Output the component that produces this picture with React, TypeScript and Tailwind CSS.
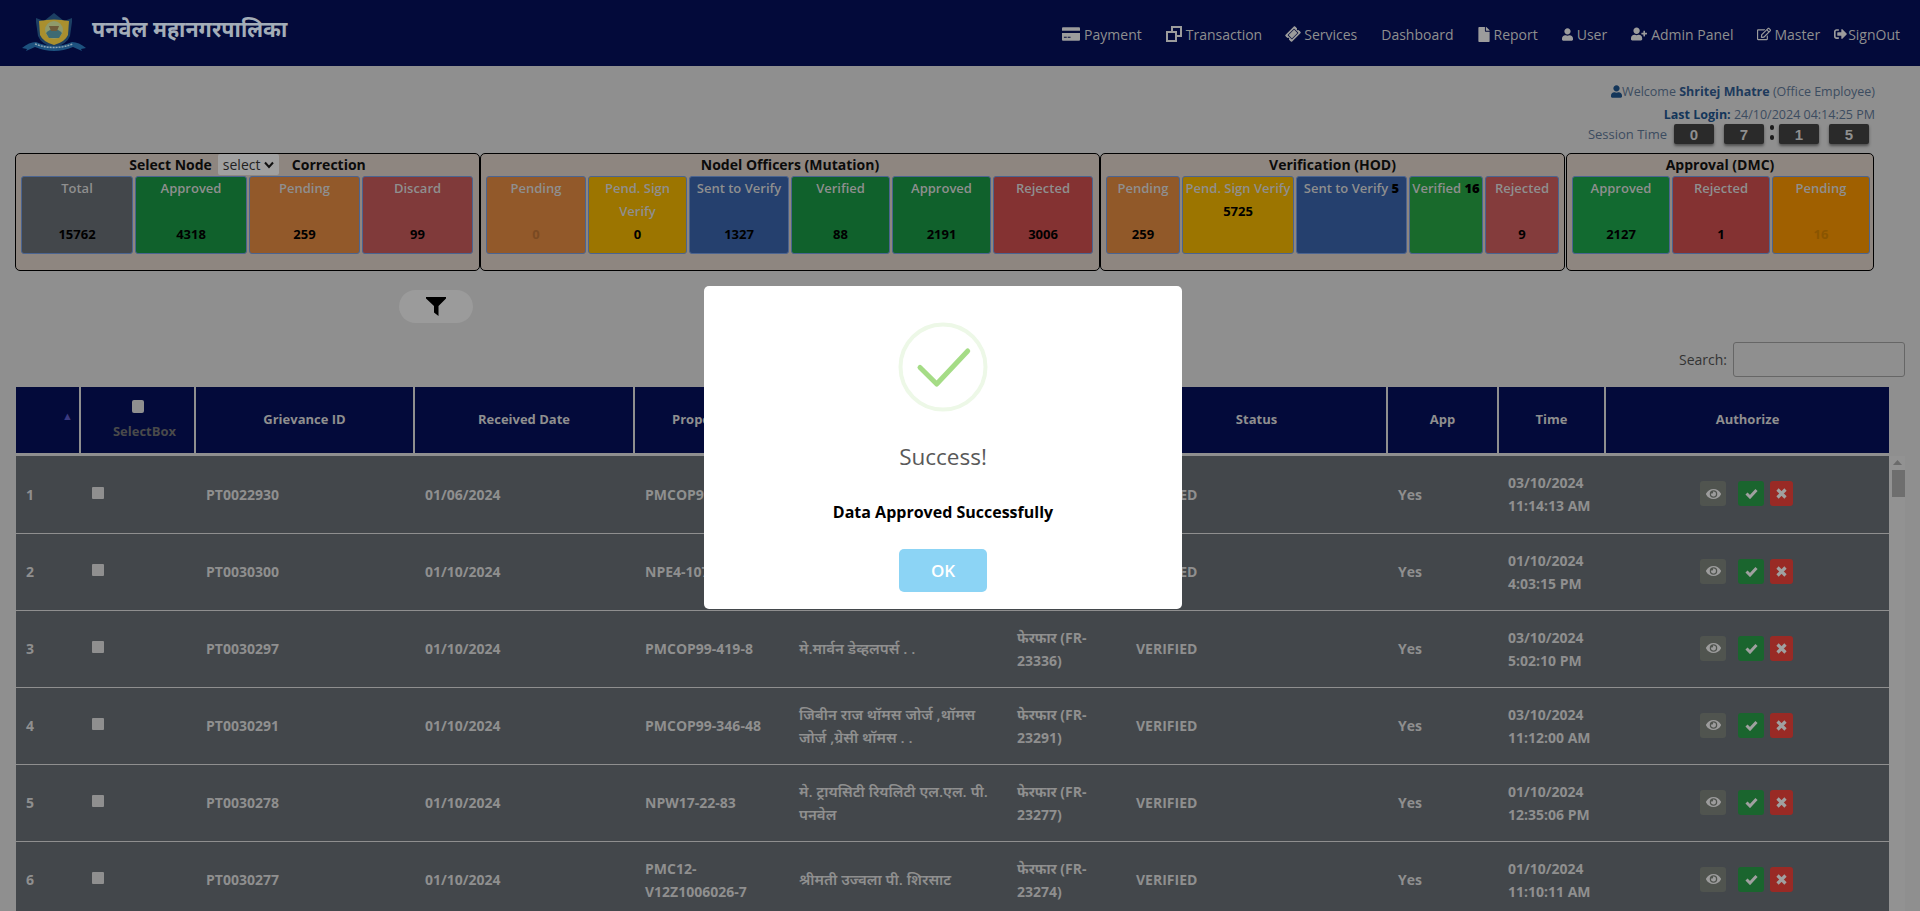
import React from "react";
import { FaTicketAlt, FaFile, FaUser, FaUserPlus, FaRegEdit, FaSignOutAlt, FaEye } from "react-icons/fa";

const Logo = () => (
  <svg width="66" height="40" viewBox="0 0 66 40" className="shrink-0">
    <path d="M15 6 L23 9 L33 1 L43 9 L51 6 L51 10 L49 24 Q46 32 33 36 Q20 32 17 24 L15 10 Z" fill="#1c3f63" />
    <path d="M18 9 Q33 6 48 9 L47 23 Q44 30 33 33 Q22 30 19 23 Z" fill="#a98f2e" />
    <circle cx="33" cy="18" r="9" fill="#8f9a6b" />
    <path d="M25 21 Q33 13 41 21 L38 26 L28 26 Z" fill="#3d6a73" />
    <path d="M28 14 L38 14 L36 19 L30 19 Z" fill="#6e5a3a" />
    <path d="M1 36 Q8 30 15 30 Q33 38 51 30 Q58 30 65 36 L60 37 L61 39 L52 35 Q33 43 14 35 L5 39 L6 37 Z" fill="#1d527f" />
    <path d="M14 32 Q33 39 52 32" stroke="#8fa6b5" strokeWidth="1.4" strokeDasharray="2 1" fill="none" />
  </svg>
);

const CardIcon = () => (
  <svg width="18" height="14" viewBox="0 0 19 14">
    <path d="M1 0 H18 Q19 0 19 1 V3.5 H0 V1 Q0 0 1 0 Z" fill="#9c9c9c" />
    <path fillRule="evenodd" d="M0 6 H19 V13 Q19 14 18 14 H1 Q0 14 0 13 Z M2 10 V11 H5 V10 Z M6 10 V11 H9 V10 Z" fill="#9c9c9c" />
  </svg>
);

const CloneIcon = () => (
  <svg width="16" height="16" viewBox="0 0 16 16" fill="none" stroke="#9c9c9c" strokeWidth="2">
    <rect x="6" y="1" width="9" height="9" />
    <rect x="1" y="6" width="9" height="9" fill="#030a3a" />
  </svg>
);

const nav: { t: string; i?: React.ReactNode; cls?: string }[] = [
  { t: "Payment", i: <CardIcon /> },
  { t: "Transaction", i: <CloneIcon /> },
  { t: "Services", i: <FaTicketAlt className="w-[14px] h-[14px] -rotate-45 text-[#9c9c9c]" /> },
  { t: "Dashboard" },
  { t: "Report", i: <FaFile className="w-[12px] h-[15px] text-[#9c9c9c]" /> },
  { t: "User", i: <FaUser className="w-[11px] h-[13px] text-[#9c9c9c]" /> },
  { t: "Admin Panel", i: <FaUserPlus className="w-[16px] h-[14px] text-[#9c9c9c]" /> },
  { t: "Master", i: <FaRegEdit className="w-[14px] h-[14px] text-[#9c9c9c]" />, cls: "pl-[11px] pr-[10px]" },
];

type C = { w: number; bg: string; label: React.ReactNode; num?: React.ReactNode; numCls?: string; blank?: boolean; nowrap?: boolean };

const Card = ({ w, bg, label, num, numCls, blank = true, nowrap }: C) => (
  <div style={{ width: w, backgroundColor: bg }} className="h-[78px] shrink-0 rounded-[3px] border border-[#4b6490] text-center text-[13px] leading-[23px] font-semibold text-[#8f8f8f]">
    <div className={nowrap ? "whitespace-nowrap" : ""}>{label}</div>
    {blank && <div className="h-[23px]" />}
    {num !== undefined && <div className={`font-bold ${numCls ?? "text-black"}`}>{num}</div>}
  </div>
);

const Group = ({ w, title, cards }: { w: number; title: React.ReactNode; cards: C[] }) => (
  <div style={{ width: w }} className="h-[118px] shrink-0 rounded-[5px] border border-black bg-[#8e8680] px-[5px]">
    <div className="h-[22px] pb-[1px] flex items-center justify-center gap-[3px] font-bold text-[#0b0b0b] leading-[21px]">{title}</div>
    <div className="flex gap-[2px]">{cards.map((c, i) => <Card key={i} {...c} />)}</div>
  </div>
);

const GREEN = "#10612c", ORANGE = "#92592a", BLUE = "#25406e", RED = "#843232", GOLD = "#9c7500";

const Timer = ({ d }: { d: string }) => (
  <div className="w-[40px] h-[20px] rounded-[2px] bg-[#2a2a2a] shadow-[0_2px_3px_rgba(0,0,0,0.45)] flex items-center justify-center text-[15px] font-bold text-[#8f8f8f] font-['Liberation_Sans',sans-serif]">{d}</div>
);

const widths = [64, 115, 219, 220, 155, 218, 119, 261, 111, 107, 284];
const Cols = () => (
  <colgroup>
    {widths.map((w, i) => <col key={i} style={{ width: w }} />)}
  </colgroup>
);

const heads = ["", "", "Grievance ID", "Received Date", "Property No", "Name", "Type", "Status", "App", "Time", "Authorize"];

const rows = [
  ["1", "PT0022930", "01/06/2024", "PMCOP99-419-7", "मे.मार्वन डेव्हलपर्स . .", "फेरफार (FR-23340)", "03/10/2024", "11:14:13 AM"],
  ["2", "PT0030300", "01/10/2024", "NPE4-107-12", "मे.मार्वन डेव्हलपर्स . .", "फेरफार (FR-23338)", "01/10/2024", "4:03:15 PM"],
  ["3", "PT0030297", "01/10/2024", "PMCOP99-419-8", "मे.मार्वन डेव्हलपर्स . .", "फेरफार (FR-23336)", "03/10/2024", "5:02:10 PM"],
  ["4", "PT0030291", "01/10/2024", "PMCOP99-346-48", "जिबीन राज थॉमस जोर्ज ,थॉमस जोर्ज ,ग्रेसी थॉमस . .", "फेरफार (FR-23291)", "03/10/2024", "11:12:00 AM"],
  ["5", "PT0030278", "01/10/2024", "NPW17-22-83", "मे. ट्रायसिटी रियलिटी एल.एल. पी. पनवेल", "फेरफार (FR-23277)", "01/10/2024", "12:35:06 PM"],
  ["6", "PT0030277", "01/10/2024", "PMC12-V12Z1006026-7", "श्रीमती उज्वला पी. शिरसाट", "फेरफार (FR-23274)", "01/10/2024", "11:10:11 AM"],
];

export default function App() {
  return (
    <div className="relative h-[911px] overflow-hidden bg-[#8f8f8f] text-[14px] font-['Open_Sans','Noto_Sans_Devanagari','Noto_Sans',sans-serif]">
      <header className="h-[66px] bg-[#030a3a] flex items-center pl-[21px]">
        <div className="mt-[-1px] mb-[1px]"><Logo /></div>
        <div className="ml-[5px] mt-[-8px] text-[21.5px] font-bold text-[#a3adb8] leading-none">पनवेल महानगरपालिका</div>
        <nav className="ml-auto flex items-center h-full pr-[20px] text-[#8f8f8f] mt-[2px]">
          {nav.map((n) => (
            <div key={n.t} className={`flex items-center gap-[4px] ${n.cls ?? "px-[12px]"}`}>
              {n.i}
              <span>{n.t}</span>
            </div>
          ))}
          <div className="flex items-center gap-[1px] pl-[4px]"><FaSignOutAlt className="w-[13px] h-[14px] text-[#9c9c9c]" /><span>SignOut</span></div>
        </nav>
      </header>

      <div className="h-[87px] pr-[45px] flex flex-col items-end text-[12.5px] text-[#3c4c60] pt-[14px] leading-[23px]">
        <div className="flex items-center"><FaUser className="w-[11px] h-[13px] text-[#14365a]" /><span>Welcome <b className="text-[#1d3a5c]">Shritej Mhatre</b> (Office Employee)</span></div>
        <div><b className="text-[#14365a]">Last Login:</b> 24/10/2024 04:14:25 PM</div>
        <div className="flex items-start h-[20px] pr-[6px] mt-[-2px]">
          <span className="mr-[7px] mt-[-1px] text-[13px]">Session Time</span>
          <Timer d="0" /><div className="w-[10px]" /><Timer d="7" />
          <div className="w-[15px] flex flex-col items-center gap-[5px] pt-[1px]"><i className="w-[4px] h-[5px] rounded-full bg-[#1c1c1c]" /><i className="w-[4px] h-[5px] rounded-full bg-[#1c1c1c]" /></div>
          <Timer d="1" /><div className="w-[10px]" /><Timer d="5" />
        </div>
      </div>

      <section className="flex pl-[15px]">
        <Group w={465} title={<><span>Select Node</span><span className="w-[61px] h-[21px] ml-[3px] bg-[#a0a0a0] rounded-[2px] font-normal text-[#222] flex items-center justify-between px-[5px]">select<svg width="10" height="8" viewBox="0 0 10 8"><path d="M1 1.5 L5 6 L9 1.5" stroke="#111" strokeWidth="2" fill="none" /></svg></span><span className="ml-[10px]">Correction</span></>} cards={[
          { w: 112, bg: "#43474b", label: "Total", num: 15762 },
          { w: 112, bg: GREEN, label: "Approved", num: 4318 },
          { w: 111, bg: ORANGE, label: "Pending", num: 259 },
          { w: 111, bg: "#803a3a", label: "Discard", num: 99 },
        ]} />
        <Group w={620} title="Nodel Officers (Mutation)" cards={[
          { w: 100, bg: ORANGE, label: "Pending", num: 0, numCls: "text-[#7a4a22]" },
          { w: 99, bg: GOLD, label: "Pend. Sign Verify", num: 0, blank: false },
          { w: 100, bg: BLUE, label: "Sent to Verify", num: 1327 },
          { w: 99, bg: GREEN, label: "Verified", num: 88 },
          { w: 99, bg: GREEN, label: "Approved", num: 2191 },
          { w: 100, bg: RED, label: "Rejected", num: 3006 },
        ]} />
        <Group w={465} title="Verification (HOD)" cards={[
          { w: 74, bg: "#915929", label: "Pending", num: 259 },
          { w: 112, bg: GOLD, label: "Pend. Sign Verify", num: 5725, blank: false, nowrap: true },
          { w: 111, bg: BLUE, label: <>Sent to Verify <b className="text-black">5</b></>, nowrap: true },
          { w: 74, bg: "#196a2c", label: <>Verified <b className="text-black">16</b></>, nowrap: true },
          { w: 74, bg: "#843c3c", label: "Rejected", num: 9 },
        ]} />
        <div className="w-[1px]" />
        <Group w={308} title="Approval (DMC)" cards={[
          { w: 98, bg: "#126a30", label: "Approved", num: 2127 },
          { w: 98, bg: RED, label: "Rejected", num: 1 },
          { w: 98, bg: "#a06000", label: "Pending", num: 16, numCls: "text-[#8a5500]" },
        ]} />
      </section>

      <div className="ml-[399px] mt-[19px] w-[74px] h-[33px] rounded-full bg-[#9b9b9b] flex items-center justify-center">
        <svg width="20" height="19" viewBox="0 0 20 19"><path d="M0 0 H20 V1.5 L12.5 9 V19 L8 15.5 V9 L0 1.5 Z" fill="#000" /></svg>
      </div>

      <div className="h-[35px] mt-[19px] flex items-center justify-end pr-[15px] text-[#333]">
        <span className="mr-[6px]">Search:</span>
        <div className="w-[172px] h-[35px] rounded-[3px] border border-[#666]" />
      </div>

      <div className="mt-[10px] ml-[16px] w-[1889px]">
        <table className="table-fixed w-[1873px] border-collapse">
          <Cols />
          <thead>
            <tr className="h-[66px] bg-[#030a3a] text-[#8f8f8f] text-[13px] font-bold">
              {heads.map((h, i) => (
                <th key={i} className="relative border-r-2 last:border-r-0 border-[#8f8f8f] text-center font-bold p-0">
                  {i === 0 && <span className="absolute right-[6px] top-[21px] text-[11px] text-[#3a3a80]">▲</span>}
                  {i === 1 ? (
                    <div className="flex flex-col items-center text-[#4a4a4a] leading-[18px]">
                      <span className="w-[12px] h-[13px] rounded-[2px] bg-[#8f8f8f] mb-[9px]" />
                      <span className="ml-[14px]">SelectBox</span>
                    </div>
                  ) : h}
                </th>
              ))}
            </tr>
          </thead>
        </table>
        <div className="flex mt-[3px]">
          <table className="table-fixed w-[1872px] border-collapse">
            <Cols />
            <tbody>
              {rows.map((r) => (
                <tr key={r[0]} className="h-[77px] bg-[#43474b] border-b border-[#8f8f8f] text-[#8f8f8f] font-bold leading-[23px]">
                  <td className="pl-[10px]">{r[0]}</td>
                  <td className="pl-[12px]"><div className="w-[12px] h-[12px] bg-[#8f8f8f] rounded-[1px] mb-[3px]" /></td>
                  <td className="pl-[11px]">{r[1]}</td>
                  <td className="pl-[11px]">{r[2]}</td>
                  <td className="pl-[11px] pr-[4px] break-words">{r[3] === "PMC12-V12Z1006026-7" ? <>PMC12-<br />V12Z1006026-7</> : r[3]}</td>
                  <td className="pl-[10px] pr-[8px] text-[15px] font-semibold">{r[4]}</td>
                  <td className="pl-[10px] pr-[6px]">{r[5]}</td>
                  <td className="pl-[10px]">VERIFIED</td>
                  <td className="pl-[11px]">Yes</td>
                  <td className="pl-[10px]"><div className="whitespace-nowrap">{r[6]}</div><div className="whitespace-nowrap">{r[7]}</div></td>
                  <td className="pl-[95px]">
                    <div className="flex items-center mb-[1px]">
                      <span className="w-[26px] h-[25px] rounded-[3px] bg-[#50544f] flex items-center justify-center"><FaEye className="w-[15px] h-[14px] text-[#9c9c9c]" /></span>
                      <span className="ml-[12px] w-[26px] h-[25px] rounded-[3px] bg-[#1a652e] flex items-center justify-center">
                        <svg width="13" height="11" viewBox="0 0 13 11"><path d="M1.5 5.5 L5 9 L11.5 2" fill="none" stroke="#a0a0a0" strokeWidth="3" /></svg>
                      </span>
                      <span className="ml-[6px] w-[23px] h-[25px] rounded-[3px] bg-[#992a25] flex items-center justify-center">
                        <svg width="11" height="11" viewBox="0 0 11 11"><path d="M1.5 1.5 L9.5 9.5 M9.5 1.5 L1.5 9.5" fill="none" stroke="#a0a0a0" strokeWidth="3.2" /></svg>
                      </span>
                    </div>
                  </td>
                </tr>
              ))}
            </tbody>
          </table>
          <div className="w-[17px] bg-[#929292] relative">
            <svg width="9" height="5" viewBox="0 0 9 5" className="mx-auto mt-[4px]"><path d="M0 5 L4.5 0 L9 5 Z" fill="#6b6b6b" /></svg>
            <div className="absolute left-[3px] top-[14px] w-[13px] h-[27px] bg-[#6e6e6e]" />
          </div>
        </div>
      </div>

      <div className="fixed inset-0 flex justify-center pt-[286px] pr-[34px]">
        <div className="w-[478px] h-[323px] bg-white rounded-[5px] flex flex-col items-center">
          <svg width="92" height="92" viewBox="0 0 92 92" className="mt-[35px]">
            <circle cx="46" cy="46" r="42.5" fill="none" stroke="#edf8e7" strokeWidth="4" />
            <path d="M23 46.5 L39.7 63 L70.7 30" fill="none" stroke="#a5dc86" strokeWidth="5" strokeLinecap="round" strokeLinejoin="round" />
          </svg>
          <div className="mt-[29px] text-[22.5px] leading-[30px] text-[#595959]">Success!</div>
          <div className="mt-[29px] text-[16px] leading-[23px] font-bold text-black">Data Approved Successfully</div>
          <div className="mt-[25px] w-[88px] h-[43px] rounded-[5px] bg-[#8cd4f5] flex items-center justify-center text-[17px] font-semibold text-white">OK</div>
        </div>
      </div>
    </div>
  );
}
